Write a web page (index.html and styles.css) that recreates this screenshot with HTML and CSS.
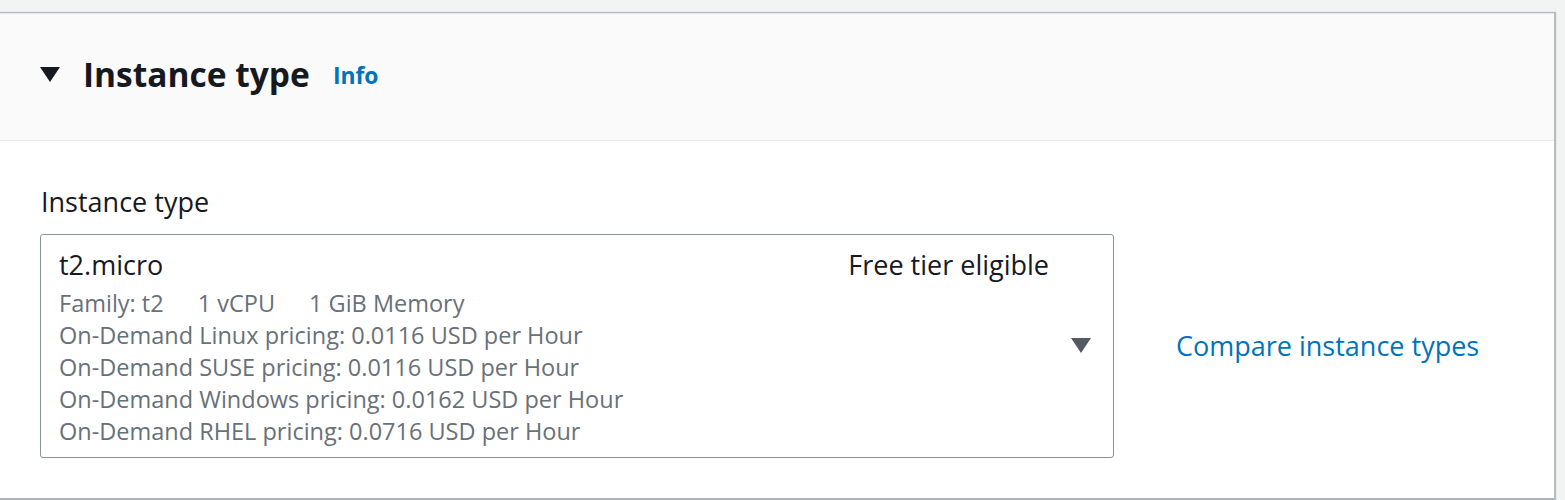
FILE: index.html
```html
<!DOCTYPE html>
<html>
<head>
<meta charset="utf-8">
<link rel="stylesheet" href="styles.css">
</head>
<body>
<div class="page">
  <section class="panel">
    <header class="panel-header">
      <svg class="caret" width="20" height="16" viewBox="0 0 20 16"><path d="M0 0 H20 L10 15 Z" fill="#16191f"/></svg>
      <h2 class="title">Instance type</h2>
      <a class="info">Info</a>
    </header>
    <div class="panel-body">
      <div class="field">
        <div class="label">Instance type</div>
        <div class="row">
          <div class="select">
            <div class="select-content">
              <div class="select-top">
                <span class="name">t2.micro</span>
                <span class="tag">Free tier eligible</span>
              </div>
              <div class="meta first"><span>Family: t2</span><span>1 vCPU</span><span>1 GiB Memory</span></div>
              <div class="meta">On-Demand Linux pricing: 0.0116 USD per Hour</div>
              <div class="meta">On-Demand SUSE pricing: 0.0116 USD per Hour</div>
              <div class="meta">On-Demand Windows pricing: 0.0162 USD per Hour</div>
              <div class="meta">On-Demand RHEL pricing: 0.0716 USD per Hour</div>
            </div>
            <svg class="dd" width="20" height="15" viewBox="0 0 20 15"><path d="M0 0 H20 L10 15 Z" fill="#545b64"/></svg>
          </div>
          <a class="compare">Compare instance types</a>
        </div>
      </div>
    </div>
  </section>
</div>
</body>
</html>
```
FILE: styles.css
```css
html, body {
  margin: 0;
  padding: 0;
}
body {
  background: #f2f3f3;
  font-family: "Open Sans", "Noto Sans", sans-serif;
  color: #16191f;
  width: 1565px;
  height: 500px;
  overflow: hidden;
}
.page {
  padding-top: 13px;
  padding-right: 11px;
}
.panel {
  background: #fff;
  border-top: 1px solid #e3e6e6;
  border-bottom: 2px solid #aab7b8;
  box-shadow: 1px 0 1px 1px rgba(0, 28, 36, 0.25);
  margin-left: -4px;
  padding-left: 4px;
}
.panel-header {
  height: 127px;
  box-sizing: border-box;
  padding-bottom: 7px;
  background: #fafafa;
  border-bottom: 1px solid #eaeded;
  display: flex;
  align-items: center;
  padding-left: 40px;
}
.caret {
  display: block;
  margin-right: 23px;
  margin-top: 2px;
}
.title {
  margin: 0;
  font-size: 33.5px;
  font-weight: 700;
  line-height: 40px;
  color: #16191f;
}
.info {
  margin-left: 23px;
  font-size: 22.9px;
  font-weight: 700;
  color: #0073bb;
  margin-top: 4px;
}
.panel-body {
  padding: 43px 40px 40px 40px;
}
.label {
  font-size: 27px;
  line-height: 36px;
  margin-bottom: 14px;
  padding-left: 1px;
}
.row {
  display: flex;
  align-items: center;
}
.select {
  width: 1074px;
  box-sizing: border-box;
  border: 1px solid #879596;
  border-radius: 3px;
  padding: 14px 22px 10px 18px;
  display: flex;
  align-items: center;
}
.select-content {
  flex: 1;
}
.select-top {
  display: flex;
  justify-content: space-between;
  font-size: 27px;
  line-height: 32px;
  color: #16191f;
  padding-right: 22px;
}
.meta {
  font-size: 23.5px;
  line-height: 32px;
  color: #687078;
}
.meta.first {
  margin-top: 6px;
}
.meta span {
  margin-right: 34px;
}
.dd {
  display: block;
  margin-bottom: 6px;
}
.compare {
  margin-left: 62px;
  margin-bottom: 2px;
  font-size: 27px;
  color: #0073bb;
}
```
